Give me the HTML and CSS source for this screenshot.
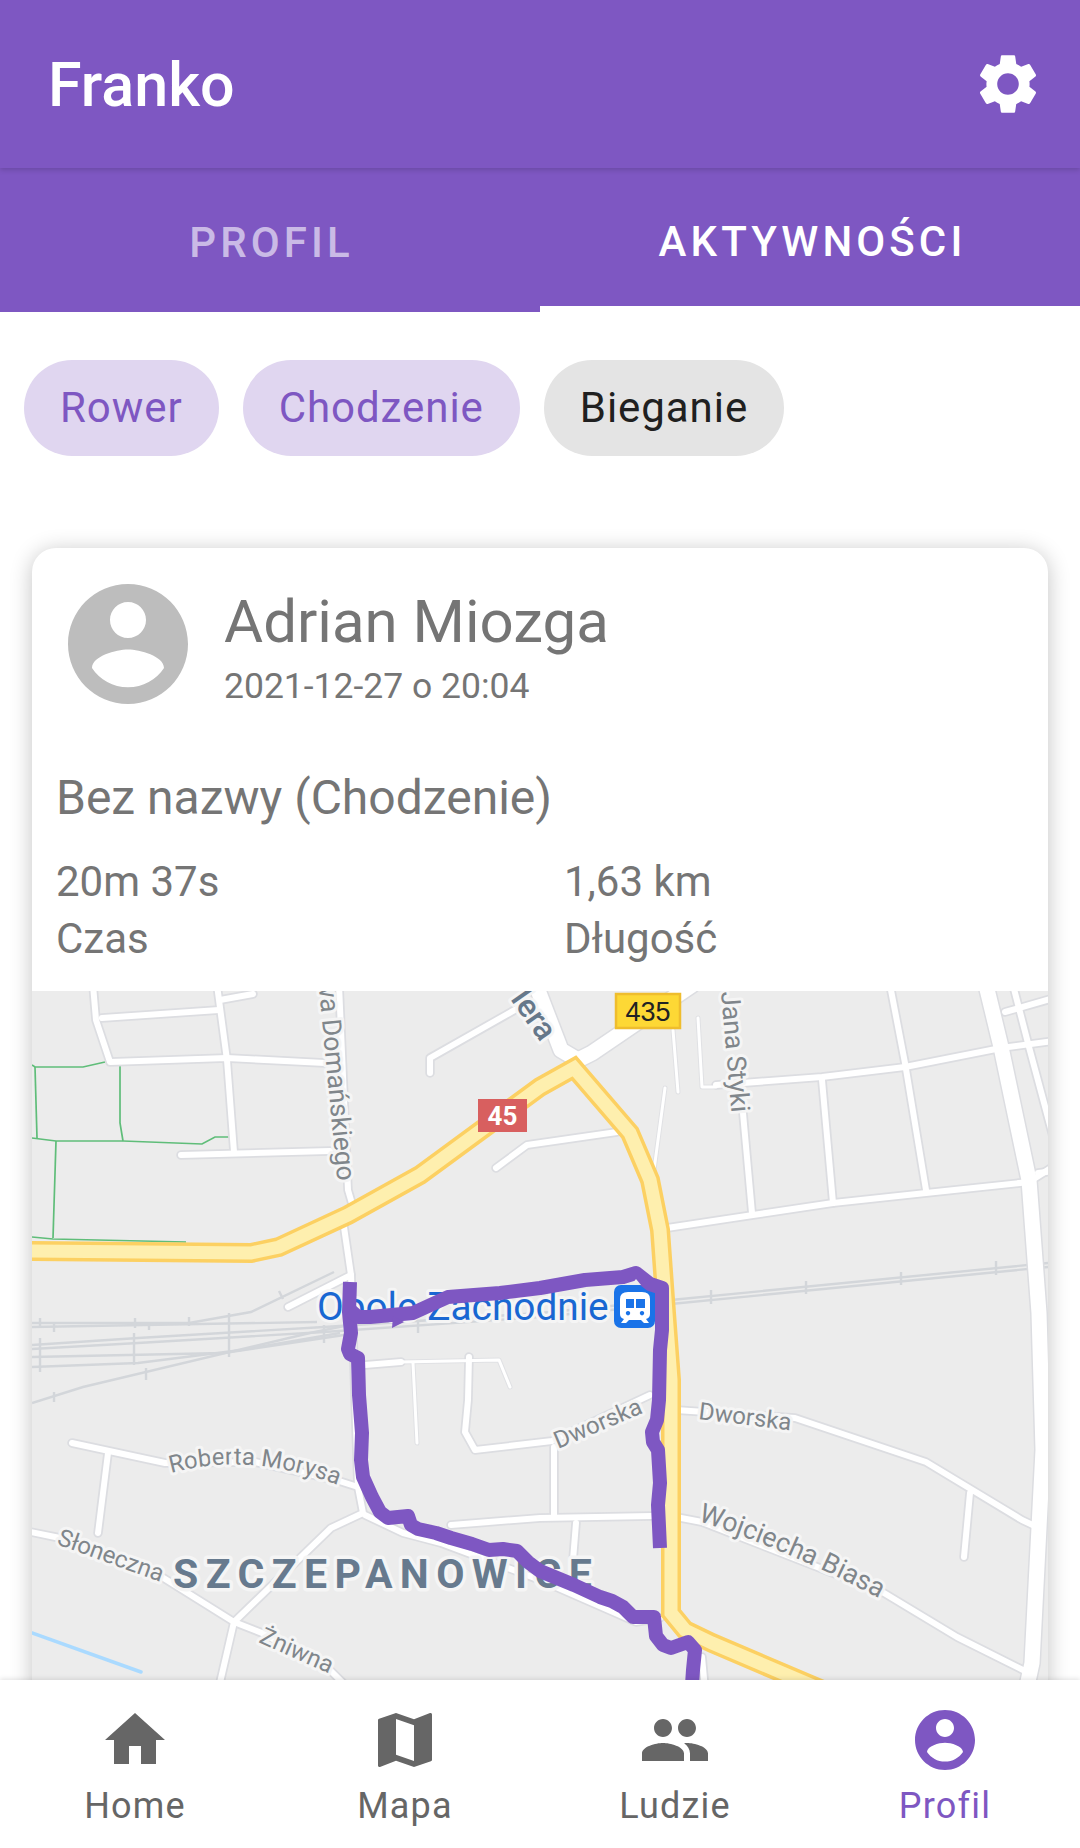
FILE: index.html
```html
<!DOCTYPE html>
<html lang="pl">
<head>
<meta charset="utf-8">
<title>Franko</title>
<link rel="stylesheet" href="styles.css">
</head>
<body>
<div class="app">
  <header class="appbar">
    <h1 class="brand">Franko</h1>
    <svg class="gear" viewBox="0 0 24 24"><path d="M19.14 12.94c.04-.3.06-.61.06-.94 0-.32-.02-.64-.07-.94l2.03-1.58c.18-.14.23-.41.12-.61l-1.92-3.32c-.12-.22-.37-.29-.59-.22l-2.39.96c-.5-.38-1.03-.7-1.62-.94l-.36-2.54c-.04-.24-.24-.41-.48-.41h-3.84c-.24 0-.43.17-.47.41l-.36 2.54c-.59.24-1.13.57-1.62.94l-2.39-.96c-.22-.08-.47 0-.59.22L2.74 8.87c-.12.21-.08.47.12.61l2.03 1.58c-.05.3-.09.63-.09.94s.02.64.07.94l-2.03 1.58c-.18.14-.23.41-.12.61l1.92 3.32c.12.22.37.29.59.22l2.39-.96c.5.38 1.03.7 1.62.94l.36 2.54c.05.24.24.41.48.41h3.84c.24 0 .44-.17.47-.41l.36-2.54c.59-.24 1.13-.56 1.62-.94l2.39.96c.22.08.47 0 .59-.22l1.92-3.32c.12-.22.07-.47-.12-.61l-2.01-1.58zM12 15.6c-1.98 0-3.6-1.62-3.6-3.6s1.62-3.6 3.6-3.6 3.6 1.62 3.6 3.6-1.62 3.6-3.6 3.6z"/></svg>
  </header>
  <nav class="tabs">
    <div class="tab">PROFIL</div>
    <div class="tab tab-active">AKTYWNOŚCI</div>
  </nav>
  <main class="content">
    <div class="chips">
      <span class="chip chip-on">Rower</span>
      <span class="chip chip-on">Chodzenie</span>
      <span class="chip">Bieganie</span>
    </div>
    <article class="card">
      <div class="card-body">
        <div class="person">
          <svg class="avatar" viewBox="0 0 24 24"><path d="M12 2C6.480 2 2 6.480 2 12s4.480 10 10 10 10-4.480 10-10S17.520 2 12 2zm0 3c1.660 0 3 1.340 3 3s-1.340 3-3 3-3-1.340-3-3 1.340-3 3-3zm0 14.200c-2.500 0-4.710-1.280-6-3.220.03-1.990 4-3.080 6-3.080 1.990 0 5.970 1.090 6 3.080-1.290 1.940-3.500 3.220-6 3.220z"/></svg>
          <div class="who">
            <div class="name">Adrian Miozga</div>
            <div class="date">2021-12-27 o 20:04</div>
          </div>
        </div>
        <div class="title">Bez nazwy (Chodzenie)</div>
        <div class="stats">
          <div class="stat"><div>20m 37s</div><div>Czas</div></div>
          <div class="stat"><div>1,63 km</div><div>Długość</div></div>
        </div>
      </div>
      <svg class="map" viewBox="32 991 1016 720">
        <defs>
          <g id="roads-main">
            <path d="M93,985 L96,1020 L110,1062 L227,1058 L325,1063"/>
            <path d="M102,1018 L219,1010"/>
            <path d="M217,985 L227,1060 L234,1152"/>
            <path d="M220,1000 L253,994"/>
            <path d="M181,1155 L330,1151"/>
            <path d="M339,985 L348,1190 L353,1207"/>
            <path d="M344,1227 L351,1275 L288,1307"/>
            <path d="M351,1275 L358,1487"/>
            <path d="M72,1443 L165,1463 L255,1462 L336,1480 L358,1487 L363,1513 L331,1528 L234,1622 L216,1700"/>
            <path d="M108,1453 L98,1533"/>
            <path d="M26,1531 L60,1538 L162,1577 L234,1622 L262,1633 L330,1670 L360,1700"/>
            <path d="M365,1515 L403,1533 L441,1543 L540,1580 L636,1622 L660,1618"/>
            <path d="M451,1525 L540,1518 L652,1516"/>
            <path d="M554,1447 L554,1515"/>
            <path d="M576,1523 L573,1560"/>
            <path d="M469,1357 L468,1400 L465,1432 L475,1450 L552,1441 L650,1395"/>
            <path d="M365,1365 L401,1362"/>
            <path d="M430,1073 L430,1058 L520,1007"/>
            <path d="M496,1168 L527,1145 L617,1132"/>
            <path d="M667,1228 L753,1215 L833,1203 L926,1193 L1029,1182 L1054,1166"/>
            <path d="M716,1085 L822,1077 L905,1067 L1001,1048 L1054,1041"/>
            <path d="M890,985 L905,1063 L926,1190"/>
            <path d="M822,1080 L833,1203"/>
            <path d="M743,1113 L752,1213"/>
            <path d="M1013,985 L1029,1047 L1054,1140"/>
            <path d="M1005,1012 L1054,998"/>
            <path d="M1038,1173 L1054,1171"/>
            <path d="M676,1410 L795,1418 L926,1462 L1022,1520 L1039,1528"/>
            <path d="M970,1493 L964,1557"/>
            <path d="M676,1517 L702,1522 L884,1593 L957,1637 L1027,1672"/>
            <path d="M702,1657 L706,1700"/>
          </g>
          <g id="roads-wide">
            <path d="M536,985 L561,1050 L578,1060"/>
            <path d="M578,1060 L592,1053 L692,985"/>
            <path d="M986,985 L1001,1047 L1029,1180 L1039,1313 L1043,1450 L1032,1663 L1024,1700"/>
          </g>
          <g id="roads-thin">
            <path d="M401,1362 L499,1360 L510,1387"/>
            <path d="M413,1363 L417,1443"/>
            <path d="M698,1018 L702,1087 L716,1087"/>
            <path d="M673,1030 L678,1092"/>
            <path d="M665,1088 L654,1170"/>
          </g>
          <g id="highway">
            <path d="M26,1251 L251,1253 L279,1247 L348,1215 L420,1175 L540,1087 L574,1068 L630,1133 L650,1180 L660,1230 L666,1313 L671,1380 L671,1613 L685,1630 L712,1643 L860,1706"/>
          </g>
          <path id="tp-roberta" d="M171,1473 Q250,1451 340,1486"/>
          <path id="tp-wojciecha" d="M698,1521 Q790,1550 890,1604"/>
        </defs>
        <rect class="map-bg" x="32" y="991" width="1016" height="720"/>
        <path class="water" d="M32,1633 L141,1672"/>
        <g class="green">
          <path d="M32,1065 L35,1067 L83,1067 L105,1062"/>
          <path d="M35,1067 L37,1138"/>
          <path d="M120,1065 L120,1123 L123,1141"/>
          <path d="M32,1138 L56,1141 L123,1141 L202,1144 L215,1137 L230,1137"/>
          <path d="M56,1141 L53,1238"/>
          <path d="M32,1237 L53,1239 L186,1242"/>
        </g>
        <g class="rail">
          <path d="M32,1323 L189,1323 L251,1312 L334,1272"/>
          <path d="M32,1327 L317,1322"/>
          <path d="M32,1345 L138,1338 L324,1327 L540,1313 L671,1300 L1048,1263"/>
          <path d="M32,1349 L138,1343 L324,1332 L540,1317 L671,1304 L1048,1267"/>
          <path d="M32,1357 L224,1353 L344,1335"/>
          <path d="M32,1367 L138,1363 L241,1350 L340,1333"/>
          <path d="M32,1403 L83,1387 L310,1333 L344,1326"/>
          <path d="M40,1318 V1328 M54,1322 V1332 M135,1318 V1328 M149,1323 V1330 M189,1317 V1326 M229,1313 V1357 M40,1338 V1372 M134,1333 V1365 M324,1325 V1343 M418,1320 V1333 M146,1368 V1380 M54,1392 V1402 M279,1291 L283,1299 M711,1290 V1304 M806,1281 V1294 M901,1272 V1285 M996,1261 V1275"/>
        </g>
        <use href="#roads-thin" class="r-thin-c"/>
        <use href="#roads-main" class="r-main-c"/>
        <use href="#roads-wide" class="r-wide-c"/>
        <use href="#roads-thin" class="r-thin"/>
        <use href="#roads-main" class="r-main"/>
        <use href="#roads-wide" class="r-wide"/>
        <use href="#highway" class="hw-c"/>
        <use href="#highway" class="hw"/>
        <text class="lbl lbl-long" transform="translate(318,979) rotate(84.500)">wa Domańskiego</text>
        <text class="lbl lbl-long" transform="translate(721,992) rotate(85)">Jana Styki</text>
        <text class="lbl-dark" transform="translate(510,999) rotate(55)">lera</text>
        <text class="lbl"><textPath href="#tp-roberta">Roberta Morysa</textPath></text>
        <text class="lbl" transform="translate(56,1544) rotate(20)">Słoneczna</text>
        <text class="lbl" transform="translate(258,1642) rotate(24)">Żniwna</text>
        <text class="lbl" transform="translate(558,1449) rotate(-23)">Dworska</text>
        <text class="lbl" transform="translate(698,1419) rotate(7)">Dworska</text>
        <text class="lbl-big"><textPath href="#tp-wojciecha">Wojciecha Biasa</textPath></text>
        <text class="district" x="173" y="1588">SZCZEPANOWICE</text>
        <g>
          <rect class="shield-red" x="478" y="1099" width="49" height="33"/>
          <text class="shield-red-t" x="502.500" y="1125">45</text>
          <rect class="shield-yel" x="616" y="994" width="64" height="34"/>
          <text class="shield-yel-t" x="648" y="1021">435</text>
        </g>
        <text class="station" x="317" y="1320">Opole Zachodnie</text>
        <rect class="st-box" x="614" y="1285" width="41" height="43" rx="7"/>
        <path class="st-ico" d="M628,1292 H642 Q650,1292 650,1299 V1314 Q650,1318 646,1319 L649,1323 H644 L641,1320 H629 L626,1323 H621 L624,1319 Q620,1318 620,1314 V1299 Q620,1292 628,1292 Z"/>
        <path class="st-win" d="M626,1299 H634 V1308 H626 Z M636,1299 H645 V1308 H636 Z M628,1311 a2.200,2.200 0 1 0 .01,0 Z M642,1311 a2.200,2.200 0 1 0 .01,0 Z"/>
        <path class="route" d="M350,1282 L349,1312 L351,1333 L348,1349 L350,1354 L358,1358 L359,1395 L362,1433 L361,1460 L363,1477 L372,1497 L380,1512 L388,1518 L408,1516 L411,1525 L418,1529 L436,1533 L451,1538 L472,1544 L489,1550 L503,1549 L517,1551 L528,1562 L540,1571 L574,1585 L600,1597 L612,1601 L623,1607 L633,1617 L654,1617 L656,1636 L663,1645 L671,1648 L688,1642 L695,1650 L693,1670 L691,1700"/>
        <path class="route" d="M350,1310 L358,1317 L370,1317 L413,1313 L448,1297 L500,1293 L540,1288 L585,1280 L623,1277 L636,1273 L650,1284 L662,1288 L662,1330 L660,1350 L659,1400 L657,1420 L652,1432 L653,1442 L658,1450 L660,1483 L658,1505 L660,1548"/>
        <path class="route-fill" d="M392,1328 L393,1316 L404,1322 Z"/>
        <path class="route-notch" d="M636,1279 L641,1285 H631 Z"/>
      </svg>
    </article>
  </main>
  <footer class="bottom">
    <div class="item">
      <svg class="ico" viewBox="0 0 24 24"><path d="M10 20v-6h4v6h5v-8h3L12 3 2 12h3v8z"/></svg>
      <span>Home</span>
    </div>
    <div class="item">
      <svg class="ico" viewBox="0 0 24 24"><path d="M20.500 3l-.16.03L15 5.100 9 3 3.360 4.900c-.21.07-.36.25-.36.48V20.500c0 .28.22.5.5.5l.16-.03L9 18.900l6 2.100 5.640-1.900c.21-.07.36-.25.36-.48V3.500c0-.28-.22-.5-.5-.5zM15 19l-6-2.110V5l6 2.110V19z"/></svg>
      <span>Mapa</span>
    </div>
    <div class="item">
      <svg class="ico" viewBox="0 0 24 24"><path d="M16 11c1.660 0 2.990-1.340 2.990-3S17.660 5 16 5c-1.660 0-3 1.340-3 3s1.340 3 3 3zm-8 0c1.660 0 2.990-1.340 2.990-3S9.660 5 8 5C6.340 5 5 6.340 5 8s1.340 3 3 3zm0 2c-2.330 0-7 1.170-7 3.500V19h14v-2.500c0-2.330-4.670-3.500-7-3.500zm8 0c-.29 0-.62.02-.97.05 1.160.84 1.970 1.970 1.970 3.450V19h6v-2.500c0-2.330-4.670-3.500-7-3.500z"/></svg>
      <span>Ludzie</span>
    </div>
    <div class="item item-on">
      <svg class="ico" viewBox="0 0 24 24"><path d="M12 2C6.480 2 2 6.480 2 12s4.480 10 10 10 10-4.480 10-10S17.520 2 12 2zm0 3c1.660 0 3 1.340 3 3s-1.340 3-3 3-3-1.340-3-3 1.340-3 3-3zm0 14.200c-2.500 0-4.710-1.280-6-3.220.03-1.990 4-3.080 6-3.080 1.990 0 5.970 1.090 6 3.080-1.290 1.940-3.500 3.220-6 3.220z"/></svg>
      <span>Profil</span>
    </div>
  </footer>
</div>
</body>
</html>
```

FILE: styles.css
```css
* { box-sizing: border-box; }
html, body { margin: 0; padding: 0; background: #fff; }
body { font-family: Roboto, "Noto Sans", sans-serif; }

.app { width: 1080px; height: 1848px; display: flex; flex-direction: column; overflow: hidden; }

.appbar {
  height: 168px; flex: none; background: #7e57c2;
  display: flex; align-items: center; justify-content: space-between;
  padding: 0 36px 0 48px; position: relative; z-index: 2;
  box-shadow: 0 2px 5px rgba(0,0,0,.16);
}
.brand { margin: 3px 0 0; font-size: 61px; font-weight: 500; color: #fff; line-height: 1; }
.gear { width: 72px; height: 72px; fill: #fff; }

.tabs { height: 144px; flex: none; background: #7e57c2; display: grid; grid-template-columns: 1fr 1fr; }
.tab {
  display: flex; align-items: center; justify-content: center;
  font-size: 42px; font-weight: 500; letter-spacing: 4.100px;
  color: rgba(255,255,255,.6); padding: 4px 0 0 3px;
}
.tab-active { color: #fff; border-bottom: 6px solid #fff; padding: 8px 0 0 5px; }

.content { flex: 1; min-height: 0; overflow: hidden; padding: 48px 32px 0; }

.chips { display: flex; gap: 24px; margin: 0 -8px 92px; }
.chip {
  height: 96px; border-radius: 48px; padding: 0 36px 2px;
  display: flex; align-items: center;
  font-size: 42px; letter-spacing: .95px; color: #202020; background: #e4e4e4;
}
.chip-on { background: #e0d6f0; color: #7e57c2; }

.card { width: 1016px; border-radius: 24px; background: #fff; box-shadow: 0 3px 22px rgba(0,0,0,.24); overflow: hidden; }
.card-body { height: 443px; padding: 24px 24px 0; color: #757575; }

.person { display: flex; align-items: center; gap: 24px; }
.avatar { width: 144px; height: 144px; fill: #bdbdbd; flex: none; }
.who { padding-top: 5px; }
.name { font-size: 60px; line-height: 70px; }
.date { font-size: 35.500px; line-height: 42px; margin-top: 8px; }
.title { font-size: 48px; line-height: 56px; margin-top: 54px; }
.stats { display: grid; grid-template-columns: 508px 1fr; margin-top: 28px; }
.stat { font-size: 42px; line-height: 56.500px; }

.map { display: block; width: 1016px; height: 720px; }
.map-bg { fill: #ececec; }
.water { fill: none; stroke: #aadaff; stroke-width: 3.500; stroke-linecap: round; }
.green { fill: none; stroke: #5fbd79; stroke-width: 1.700; }
.rail { fill: none; stroke: #d3d6da; stroke-width: 2.400; }

.r-main-c, .r-wide-c, .r-thin-c, .r-main, .r-wide, .r-thin, .hw, .hw-c {
  fill: none; stroke-linecap: round; stroke-linejoin: round;
}
.r-main-c { stroke: #dcdde1; stroke-width: 9.500; }
.r-main { stroke: #fff; stroke-width: 6; }
.r-wide-c { stroke: #dcdde1; stroke-width: 18; }
.r-wide { stroke: #fff; stroke-width: 15; }
.r-thin-c { stroke: #e0e1e4; stroke-width: 5; }
.r-thin { stroke: #fff; stroke-width: 3; }
.hw-c { stroke: #fcd062; stroke-width: 20; stroke-linecap: butt; stroke-linejoin: miter; }
.hw { stroke: #feefae; stroke-width: 13; stroke-linecap: butt; stroke-linejoin: miter; }

.lbl, .lbl-big, .lbl-dark, .district, .station {
  font-family: Roboto, sans-serif; paint-order: stroke; stroke: #f5f5f5; stroke-linejoin: round;
}
.lbl { font-size: 24px; fill: #80868b; stroke-width: 6px; }
.lbl-long { font-size: 26.500px; }
.lbl-big { font-size: 27px; fill: #80868b; stroke-width: 6px; }
.lbl-dark { font-size: 32px; font-weight: 500; fill: #66788a; stroke-width: 6px; }
.district { font-size: 41px; font-weight: 700; fill: #677a8e; stroke-width: 7px; letter-spacing: 7.400px; }
.station { font-size: 38.800px; fill: #1967d2; stroke-width: 6px; }

.shield-red { fill: #d85f5f; }
.shield-red-t { font-family: Roboto, sans-serif; font-size: 26px; font-weight: 700; fill: #fff; text-anchor: middle; }
.shield-yel { fill: #fdd835; stroke: #efbd2d; stroke-width: 2.500; }
.shield-yel-t { font-family: "Liberation Sans", sans-serif; font-size: 27px; fill: #202124; text-anchor: middle; }

.st-box { fill: #1a73e8; }
.st-ico { fill: #fff; }
.st-win { fill: #1a73e8; }
.route { fill: none; stroke: #7e57c2; stroke-width: 14; stroke-linejoin: round; }
.route-fill { fill: #7e57c2; }
.route-notch { fill: #eeeeee; }

.bottom {
  height: 168px; flex: none; background: #fff; position: relative; z-index: 2;
  display: grid; grid-template-columns: repeat(4, 1fr);
  box-shadow: 0 -1px 5px rgba(0,0,0,.12);
}
.item { display: flex; flex-direction: column; align-items: center; padding-top: 24px; color: #666; font-size: 36px; letter-spacing: 1.200px; line-height: 42px; }
.item span { margin-top: 9px; }
.ico { width: 72px; height: 72px; fill: #666; }
.item-on, .item-on .ico { color: #7e57c2; fill: #7e57c2; }
```
